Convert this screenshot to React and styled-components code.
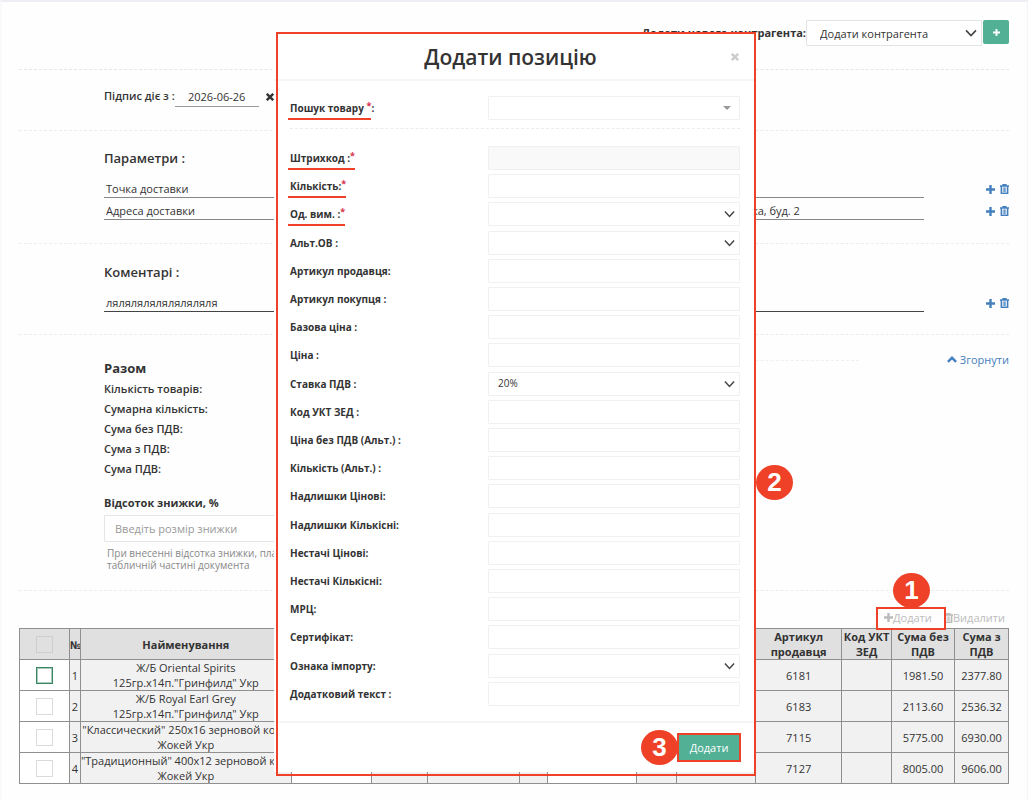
import React from "react";
import styled, { createGlobalStyle, css } from "styled-components";

const red = "#ee4127";
const green = "#52b095";
const blue = "#4480bd";

const GlobalStyle = createGlobalStyle`
  *, *::before, *::after { box-sizing: border-box; }
  body {
    margin: 0;
    background: #fefefe;
    color: #333;
    font-family: "Open Sans", "Noto Sans", sans-serif;
    font-size: 11px;
    line-height: 15px;
  }
  button, input, select { font: inherit; color: inherit; margin: 0; padding: 0; }
`;

const Page = styled.div`
  position: relative;
  min-height: 100vh;
  border-top: 2px solid #eeeef4;
  border-left: 2px solid #fafafb;
  box-shadow: inset -1px 0 #f5f5f7;
  overflow: hidden;
`;

const Content = styled.main`
  padding: 0 19px 16px 17px;
`;

const Section = styled.section`
  border-bottom: 1px dashed ${(p) => p.$line || "#ececec"};
  padding: ${(p) => p.$pad || "0"};
`;

const TopBar = styled(Section)`
  display: flex;
  justify-content: flex-end;
  align-items: flex-start;
`;

const TopLabel = styled.label`
  font-weight: 700;
  line-height: 26px;
`;

const SelectBox = styled.div`
  position: relative;
  width: ${(p) => p.$width || "252px"};
  flex: none;
  select {
    display: block;
    appearance: none;
    width: 100%;
    height: ${(p) => p.$height || "24px"};
    padding: 0 ${(p) => p.$inset || "9px"};
    border: 1px solid ${(p) => p.$border || "#f0f0f0"};
    border-radius: 1px;
    background: #fff;
    outline: none;
    font-size: ${(p) => p.$size || "10px"};
  }
  svg {
    position: absolute;
    right: ${(p) => p.$arrow || "5px"};
    top: 50%;
    transform: translateY(-50%);
    pointer-events: none;
  }
`;

const AddParty = styled.button`
  width: 26px;
  height: 24px;
  margin: 0 0 0 1px;
  border: 0;
  border-radius: 2px;
  background: ${green};
  color: #fff;
  display: flex;
  align-items: center;
  justify-content: center;
`;

const SignRow = styled.div`
  display: flex;
  align-items: flex-start;
  label { font-weight: 600; line-height: 16px; }
`;

const DateInput = styled.input`
  width: 84px;
  height: 19px;
  border: 0;
  border-bottom: 1px solid #999;
  background: none;
  padding-bottom: 1px;
  text-align: center;
  outline: none;
`;

const ClearButton = styled.button`
  margin: 5px 0 0 7px;
  width: 8px;
  height: 8px;
  border: 0;
  background: none;
  svg { display: block; }
`;

const SectionTitle = styled.h2`
  margin: 0 0 ${(p) => (p.$tight ? "2px" : "9px")};
  font-size: 13px;
  line-height: 18px;
  font-weight: ${(p) => (p.$tight ? 700 : 600)};
`;

const ParamRow = styled.div`
  display: flex;
  align-items: center;
  height: 22px;
`;

const LineInput = styled.input`
  height: 22px;
  border: 0;
  border-bottom: 1px solid ${(p) => (p.$dark ? "#444" : "#888")};
  background: none;
  padding: 4px 2px 0;
  outline: none;
  min-width: 0;
  ${(p) => (p.$width ? css`width: ${p.$width};` : css`flex: 1;`)}
`;

const RowActions = styled.div`
  width: 85px;
  display: flex;
  justify-content: flex-end;
  gap: 5px;
  padding-top: 4px;
`;

const IconButton = styled.button`
  border: 0;
  background: none;
  color: ${blue};
  width: 9px;
  height: 10px;
  svg { display: block; }
`;

const Totals = styled(Section)`
  display: flex;
  align-items: flex-start;
`;

const Summary = styled.div`
  width: 190px;
`;

const SummaryList = styled.ul`
  list-style: none;
  margin: 0 0 16px;
  padding: 0;
  font-weight: 600;
  line-height: 20px;
`;

const DiscountLabel = styled.label`
  display: block;
  font-weight: 700;
  margin-bottom: 5px;
`;

const DiscountInput = styled.input`
  width: 190px;
  height: 27px;
  border: 1px solid #e5e5e5;
  border-radius: 1px;
  background: #fff;
  padding: 0 10px;
  outline: none;
  &::placeholder { color: #999; opacity: 1; }
`;

const Help = styled.p`
  margin: 5px 0 0 3px;
  font-size: 10px;
  line-height: 12px;
  color: #888;
  white-space: nowrap;
`;

const MidLine = styled.hr`
  flex: 1;
  margin: 1px 0 0;
  border: 0;
  border-top: 1px dashed #f0f0f0;
`;

const CollapseLink = styled.a`
  width: 150px;
  display: flex;
  align-items: center;
  justify-content: flex-end;
  gap: 3px;
  margin-top: -7px;
  color: ${blue};
  text-decoration: none;
`;

const TableTools = styled.div`
  display: flex;
  justify-content: flex-end;
  align-items: flex-end;
  gap: 1px;
  padding: 16px 4px 0 0;
`;

const ToolSlot = styled.div`
  position: relative;
  width: 69px;
  height: 21px;
  display: flex;
  align-items: center;
  padding-left: 10px;
`;

const ToolButton = styled.button`
  display: flex;
  align-items: center;
  border: 0;
  background: none;
  color: #bbb;
  height: 21px;
`;

const Frame = styled.span`
  position: absolute;
  inset: ${(p) => p.$inset};
  border: 2px solid ${red};
  pointer-events: none;
`;

const Badge = styled.span`
  position: absolute;
  width: 37px;
  height: 35px;
  border-radius: 50%;
  background: ${red};
  color: #fff;
  font: 700 26px/35px "Liberation Sans", Arial, sans-serif;
  text-align: center;
  z-index: 2;
  ${(p) => p.$place}
`;

const Table = styled.table`
  width: 100%;
  table-layout: fixed;
  border-collapse: collapse;
  th, td {
    height: 31px;
    padding: 0;
    border: 1px solid #8f8f8f;
    text-align: center;
    overflow: hidden;
  }
  th { background: #e0e0e0; font-weight: 700; }
`;

const Cell = styled.td`
  background: ${(p) => (p.$plain ? "#fff" : "#f1f1f1")};
  white-space: nowrap;
`;

const Check = styled.input`
  appearance: none;
  display: block;
  width: 17px;
  height: 17px;
  margin: 0 auto;
  background: ${(p) => (p.$head ? "transparent" : "#fff")};
  border: 1px solid ${(p) => (p.$head ? "#cfcfca" : "#dcdbd8")};
  ${(p) => p.$active && css`border-color: #3a8663; box-shadow: inset 0 0 0 1px #a9cbbb;`}
`;

const Overlay = styled.div`
  position: absolute;
  inset: 0;
  display: flex;
  align-items: flex-start;
  justify-content: center;
  padding-top: 31px;
`;

const Modal = styled.div`
  position: relative;
  width: 482px;
  background: #fff;
`;

const ModalHeader = styled.header`
  display: flex;
  align-items: center;
  height: 48px;
  padding: 2px 16px 0;
  border-bottom: 2px solid #f5f5f5;
  h1 {
    flex: 1;
    margin: 0;
    text-align: center;
    font-size: 21px;
    line-height: 28px;
    font-weight: 600;
  }
`;

const CloseButton = styled.button`
  width: 9px;
  height: 9px;
  border: 0;
  background: none;
  color: #ccc;
  svg { display: block; }
`;

const ModalBody = styled.div`
  padding: 15px 16px;
`;

const SearchRow = styled.div`
  padding-bottom: 8px;
  margin-bottom: 17px;
  border-bottom: 1px dashed #ececec;
`;

const Fields = styled.div`
  display: flex;
  flex-direction: column;
  justify-content: space-between;
  min-height: 560px;
`;

const FieldRow = styled.div`
  display: flex;
  justify-content: space-between;
  align-items: center;
`;

const FieldLabel = styled.label`
  font-size: 10px;
  line-height: 14px;
  font-weight: 700;
  white-space: pre;
`;

const Marked = styled.span`
  position: relative;
  &::after {
    content: "";
    position: absolute;
    left: -2px;
    right: 0;
    bottom: -5px;
    height: 2px;
    background: ${red};
  }
`;

const Star = styled.sup`
  color: #d9304c;
  font-size: 9px;
  line-height: 0;
  vertical-align: 3px;
`;

const FieldInput = styled.input`
  width: 252px;
  height: 24px;
  border: 1px solid #f0f0f0;
  border-radius: 1px;
  background: ${(p) => (p.disabled ? "#f9f9f9" : "#fff")};
  padding: 0 9px;
  outline: none;
`;

const ModalFooter = styled.footer`
  display: flex;
  justify-content: flex-end;
  border-top: 2px solid #f5f5f5;
  padding: 12px 17px;
`;

const SubmitSlot = styled.div`
  position: relative;
`;

const Submit = styled.button`
  display: block;
  width: 60px;
  height: 25px;
  border: 0;
  background: ${green};
  color: #fff;
`;

const Chevron = ({ size = 11 }) => (
  <svg width={size} height={size} viewBox="0 0 12 12" fill="none" stroke="#444" strokeWidth="1.6">
    <path d="M1 3.4 6 8.6 11 3.4" />
  </svg>
);
const Caret = () => (
  <svg width="8" height="4" viewBox="0 0 8 4" fill="#999"><path d="M0 0h8L4 4z" /></svg>
);
const Plus = ({ size = 9 }) => (
  <svg width={size} height={size} viewBox="0 0 9 9" fill="currentColor">
    <path d="M3.3 0h2.4v3.3H9v2.4H5.7V9H3.3V5.7H0V3.3h3.3z" />
  </svg>
);
const Cross = ({ size = 8 }) => (
  <svg width={size} height={size} viewBox="0 0 8 8" fill="none" stroke="currentColor" strokeWidth="2.4">
    <path d="M.8.8 7.2 7.2M7.2.8.8 7.2" />
  </svg>
);
const Trash = () => (
  <svg width="9" height="10" viewBox="0 0 9 10" fill="none" stroke="currentColor">
    <path d="M0 2h9M3 1.8V.6h3v1.2" strokeWidth="1.3" />
    <path d="M1.3 2v7.2h6.4V2" strokeWidth="1.4" />
    <path d="M3.2 3.4v4.6M4.5 3.4v4.6M5.8 3.4v4.6" strokeWidth=".8" />
  </svg>
);
const Up = () => (
  <svg width="10" height="7" viewBox="0 0 10 7" fill="none" stroke="currentColor" strokeWidth="2.4">
    <path d="M.9 5.8 5 1.8 9.1 5.8" />
  </svg>
);

const fields = [
  { label: "Штрихкод :", required: true, disabled: true },
  { label: "Кількість:", required: true },
  { label: "Од. вим. :", required: true, options: [""] },
  { label: "Альт.ОВ :", options: [""] },
  { label: "Артикул продавця:" },
  { label: "Артикул покупця :" },
  { label: "Базова ціна :" },
  { label: "Ціна :" },
  { label: "Ставка ПДВ :", options: ["20%"] },
  { label: "Код УКТ ЗЕД :" },
  { label: "Ціна без ПДВ (Альт.) :" },
  { label: "Кількість (Альт.) :" },
  { label: "Надлишки Цінові:" },
  { label: "Надлишки Кількісні:" },
  { label: "Нестачі Цінові:" },
  { label: "Нестачі Кількісні:" },
  { label: "МРЦ:" },
  { label: "Сертифікат:" },
  { label: "Ознака імпорту:", options: [""] },
  { label: "Додатковий текст :" },
];

const widths = [50, 11, 211, 80, 56, 93, 28, 89, 40, 79, 86, 50, 63, 54];
const hiddenColumns = [true, false, false, false, true, false, false];

const products = [
  { name: ["Ж/Б Oriental Spirits", '125гр.x14п."Гринфилд" Укр'], code: "6181", net: "1981.50", gross: "2377.80" },
  { name: ["Ж/Б Royal Earl Grey", '125гр.x14п."Гринфилд" Укр'], code: "6183", net: "2113.60", gross: "2536.32" },
  { name: ['"Классический" 250х16 зерновой кофе', "Жокей Укр"], code: "7115", net: "5775.00", gross: "6930.00" },
  { name: ['"Традиционный" 400х12 зерновой кофе', "Жокей Укр"], code: "7127", net: "8005.00", gross: "9606.00" },
];

const Actions = () => (
  <RowActions>
    <IconButton aria-label="Додати рядок"><Plus /></IconButton>
    <IconButton aria-label="Видалити рядок"><Trash /></IconButton>
  </RowActions>
);

function Field({ id, field }) {
  return (
    <FieldRow>
      <FieldLabel htmlFor={id}>
        {field.required ? <Marked>{field.label}<Star>*</Star></Marked> : field.label}
      </FieldLabel>
      {field.options ? (
        <SelectBox>
          <select id={id}>{field.options.map((o) => <option key={o}>{o}</option>)}</select>
          <Chevron />
        </SelectBox>
      ) : (
        <FieldInput id={id} disabled={field.disabled} />
      )}
    </FieldRow>
  );
}

export default function App() {
  return (
    <Page>
      <GlobalStyle />
      <Content>
        <TopBar $pad="18px 0 23px" $line="#e6e6e6">
          <TopLabel htmlFor="party">Додати нового контрагента:</TopLabel>
          <SelectBox $width="176px" $height="26px" $inset="13px" $border="#e3e3e3" $size="11px">
            <select id="party"><option>Додати контрагента</option></select>
            <Chevron size={12} />
          </SelectBox>
          <AddParty aria-label="Додати контрагента"><Plus size={7} /></AddParty>
        </TopBar>

        <Section $pad="18px 0 23px 85px">
          <SignRow>
            <label htmlFor="date">Підпис діє з :</label>
            <DateInput id="date" defaultValue="2026-06-26" />
            <ClearButton aria-label="Очистити дату"><Cross /></ClearButton>
          </SignRow>
        </Section>

        <Section $pad="18px 0 23px 85px">
          <SectionTitle>Параметри :</SectionTitle>
          <ParamRow>
            <LineInput aria-label="Назва параметра 1" defaultValue="Точка доставки" />
            <LineInput aria-label="Значення параметра 1" $width="174px" />
            <Actions />
          </ParamRow>
          <ParamRow>
            <LineInput aria-label="Назва параметра 2" defaultValue="Адреса доставки" />
            <LineInput aria-label="Значення параметра 2" $width="174px" defaultValue="ка, буд. 2" />
            <Actions />
          </ParamRow>
        </Section>

        <Section $pad="19px 0 22px 85px">
          <SectionTitle>Коментарі :</SectionTitle>
          <ParamRow>
            <LineInput aria-label="Коментар" $dark defaultValue="ляляляляляляляляля" />
            <Actions />
          </ParamRow>
        </Section>

        <Totals $pad="24px 0 19px 85px">
          <Summary>
            <SectionTitle $tight>Разом</SectionTitle>
            <SummaryList>
              <li>Кількість товарів:</li>
              <li>Сумарна кількість:</li>
              <li>Сума без ПДВ:</li>
              <li>Сума з ПДВ:</li>
              <li>Сума ПДВ:</li>
            </SummaryList>
            <DiscountLabel htmlFor="discount">Відсоток знижки, %</DiscountLabel>
            <DiscountInput id="discount" placeholder="Введіть розмір знижки" />
            <Help>При внесенні відсотка знижки, плат<br />табличній частині документа</Help>
          </Summary>
          <MidLine />
          <CollapseLink href="#totals"><Up />Згорнути</CollapseLink>
        </Totals>

        <TableTools>
          <ToolSlot>
            <ToolButton><Plus />Додати</ToolButton>
            <Frame $inset="0 -3px -2px 2px" />
            <Badge $place="left: 19px; top: -34px;">1</Badge>
          </ToolSlot>
          <ToolButton><Trash />Видалити</ToolButton>
        </TableTools>

        <Table>
          <colgroup>{widths.map((w, i) => <col key={i} style={{ width: `${(w / 990) * 100}%` }} />)}</colgroup>
          <thead>
            <tr>
              <th><Check type="checkbox" aria-label="Вибрати всі" $head /></th>
              <th>№</th>
              <th>Найменування</th>
              {hiddenColumns.map((_, i) => <th key={i} />)}
              <th>Артикул продавця</th>
              <th>Код УКТ ЗЕД</th>
              <th>Сума без ПДВ</th>
              <th>Сума з ПДВ</th>
            </tr>
          </thead>
          <tbody>
            {products.map((p, n) => (
              <tr key={p.code}>
                <Cell $plain><Check type="checkbox" aria-label={`Вибрати ${n + 1}`} $active={n === 0} /></Cell>
                <Cell>{n + 1}</Cell>
                <Cell>{p.name[0]}<br />{p.name[1]}</Cell>
                {hiddenColumns.map((plain, i) => <Cell key={i} $plain={plain} />)}
                <Cell>{p.code}</Cell>
                <Cell />
                <Cell>{p.net}</Cell>
                <Cell>{p.gross}</Cell>
              </tr>
            ))}
          </tbody>
        </Table>
      </Content>

      <Overlay>
        <Modal role="dialog" aria-labelledby="dialog-title">
          <ModalHeader>
            <h1 id="dialog-title">Додати позицію</h1>
            <CloseButton aria-label="Закрити"><Cross /></CloseButton>
          </ModalHeader>
          <ModalBody>
            <SearchRow>
              <FieldRow>
                <FieldLabel htmlFor="search"><Marked>Пошук товару <Star>*</Star></Marked>:</FieldLabel>
                <SelectBox $arrow="9px">
                  <select id="search"><option /></select>
                  <Caret />
                </SelectBox>
              </FieldRow>
            </SearchRow>
            <Fields>
              {fields.map((f, i) => <Field key={f.label} id={`field-${i}`} field={f} />)}
            </Fields>
          </ModalBody>
          <ModalFooter>
            <SubmitSlot>
              <Submit>Додати</Submit>
              <Frame $inset="-2px" />
              <Badge $place="right: 61px; top: -5px;">3</Badge>
            </SubmitSlot>
          </ModalFooter>
          <Frame $inset="-1px 0 -4px 2px" />
          <Badge $place="left: 482px; top: 432px;">2</Badge>
        </Modal>
      </Overlay>
    </Page>
  );
}
